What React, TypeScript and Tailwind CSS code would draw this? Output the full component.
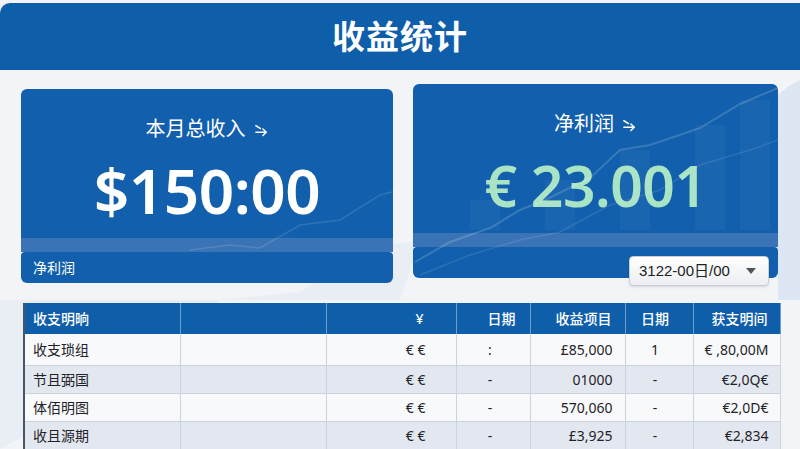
import React from 'react';

const cjk = '"Noto Sans", "Noto Sans CJK SC", sans-serif';

const rows = [
  ['收支琐组', '', '€ €', ':', '£85,000', '1', '€ ,80,00M'],
  ['节且弼国', '', '€ €', '-', '01000', '-', '€2,0Q€'],
  ['体佰明图', '', '€ €', '-', '570,060', '-', '€2,0D€'],
  ['收且源期', '', '€ €', '-', '£3,925', '-', '€2,834'],
];

function Arrow() {
  return (
    <svg viewBox="0 0 16 16" className="ml-2 inline-block size-[15px]" fill="none" stroke="currentColor" strokeWidth="1.6" strokeLinecap="round" strokeLinejoin="round">
      <path d="M2 4 L7 7" />
      <path d="M2 11 H13" />
      <path d="M9.5 7.5 L13 11 L9.5 14.5" />
    </svg>
  );
}

function StatCard({
  label,
  value,
  valueClass,
  footer,
  className,
  children,
}: {
  label: string;
  value: string;
  valueClass: string;
  footer?: string;
  className: string;
  children?: React.ReactNode;
}) {
  return (
    <div className={`relative flex flex-col ${className}`}>
      <div className="flex h-[149px] flex-col items-center rounded-t-md bg-[#1260ad] pt-[27px]">
        <p className="flex items-center text-[20px] leading-[26px] text-white">
          {label}
          <Arrow />
        </p>
        <p className={`mt-[13px] font-semibold leading-[70px] ${valueClass}`}>
          {value}
        </p>
      </div>
      <div className="h-[14px] bg-[#3b74b6]" />
      <div className="flex h-[31px] items-center rounded-b-md rounded-t-[4px] bg-[#1260ad] px-[12px] text-[14px] text-white">
        {footer}
      </div>
      {children}
    </div>
  );
}

export default function App() {
  const head = ['收支明晌', '', '¥', '日期', '收益项目', '日期', '获支明间'];
  const headAlign = ['text-left pl-[8px]', '', 'text-right pr-[32px]', 'text-right pr-[14px]', 'text-right pr-[13px]', 'text-center pr-[8px]', 'text-right pr-[12px]'];
  const cellAlign = ['text-left pl-[8px]', '', 'text-right pr-[30px]', 'text-center pr-[6px]', 'text-right pr-[12px]', 'text-center pr-[8px]', 'text-right pr-[11px]'];
  const widths = ['w-[155px]', 'w-[146px]', 'w-[130px]', 'w-[74px]', 'w-[95px]', 'w-[68px]', 'w-[87px]'];
  const rowH = ['h-[31px]', 'h-[28px]', 'h-[28px]', 'h-[28px]'];

  return (
    <div className="relative h-[449px] w-[800px] overflow-hidden bg-[#f2f4f7]" style={{ fontFamily: cjk }}>
      <svg className="pointer-events-none absolute inset-0" width="800" height="449" viewBox="0 0 800 449">
        <path d="M778 95 Q790 84 800 80 L800 300 L778 300 Z" fill="#dce7f3" />
        <path d="M0 449 L90 400 L160 350 L220 300 L300 292 L360 250 L420 240 L400 300 L0 300 Z" fill="#e2eaf4" opacity="0.6" />
      </svg>

      <header className="relative mt-[3px] flex h-[67px] items-center justify-center rounded-tl-[10px] bg-[#0f5eaa]">
        <h1 className="text-[33px] font-bold tracking-[1px] text-white">收益统计</h1>
      </header>

      <div className="relative flex items-start gap-[20px] pl-[21px]">
        <StatCard
          label="本月总收入"
          value="$150:00"
          valueClass="text-[62px] tracking-[-0.5px] text-white"
          footer="净利润"
          className="mt-[19px] w-[372px]"
        />
        <StatCard
          label="净利润"
          value="€ 23.001"
          valueClass="text-[57px] tracking-[-0.5px] text-[#a9e4c5]"
          className="mt-[14px] w-[365px]"
        >
          <div className="absolute left-[216px] top-[172px] flex h-[30px] w-[140px] items-center justify-between rounded-[4px] border border-[#c9ced6] bg-gradient-to-b from-white to-[#eceef1] pl-[9px] pr-[12px] text-[15px] text-[#222] shadow-sm">
            <span style={{ fontFamily: '"Liberation Sans", "Noto Sans CJK SC", sans-serif' }}>3122-00日/00</span>
            <svg viewBox="0 0 10 6" className="h-[6px] w-[10px]" fill="#555">
              <path d="M0 0 H10 L5 6 Z" />
            </svg>
          </div>
        </StatCard>
      </div>

      <svg className="pointer-events-none absolute left-0 top-0" width="800" height="300" viewBox="0 0 800 300">
        <g fill="#ffffff" opacity="0.03">
          <rect x="470" y="200" width="30" height="30" />
          <rect x="545" y="180" width="30" height="50" />
          <rect x="620" y="150" width="30" height="80" />
          <rect x="695" y="125" width="30" height="105" />
          <rect x="740" y="100" width="30" height="130" />
        </g>
        <polyline points="415,262 450,242 490,228 520,210 545,200 590,178 620,150 650,145 700,128 740,104 778,88 800,80" fill="none" stroke="#ffffff" strokeOpacity="0.16" strokeWidth="2" />
        <polyline points="420,275 470,255 520,240 560,232 610,205 660,190 700,165 750,150 778,140" fill="none" stroke="#ffffff" strokeOpacity="0.1" strokeWidth="1.5" />
        <polyline points="190,250 230,245 260,248 300,225 340,220 380,195 400,190" fill="none" stroke="#ffffff" strokeOpacity="0.12" strokeWidth="1.5" />
      </svg>

      <div className="relative ml-[23px] mt-[20px] w-[757px] border-l-2 border-[#4a5564]">
        <table className="w-full table-fixed border-collapse text-[14px]">
          <thead>
            <tr className="h-[31px] bg-[#0f5eaa] text-white">
              {head.map((h, i) => (
                <th key={i} className={`${widths[i]} border-r border-[#6e9bd0] font-medium ${headAlign[i]}`}>
                  {h}
                </th>
              ))}
            </tr>
          </thead>
          <tbody>
            {rows.map((r, ri) => (
              <tr key={ri} className={`${rowH[ri]} ${ri % 2 === 0 ? 'bg-[#f8f9fb]' : 'bg-[#e3e8f0]'} border-b border-[#cdd3db] text-[#1f2328]`}>
                {r.map((c, ci) => (
                  <td key={ci} className={`border-r border-[#cdd3db] ${cellAlign[ci]}`}>
                    {c}
                  </td>
                ))}
              </tr>
            ))}
          </tbody>
        </table>
      </div>
    </div>
  );
}
